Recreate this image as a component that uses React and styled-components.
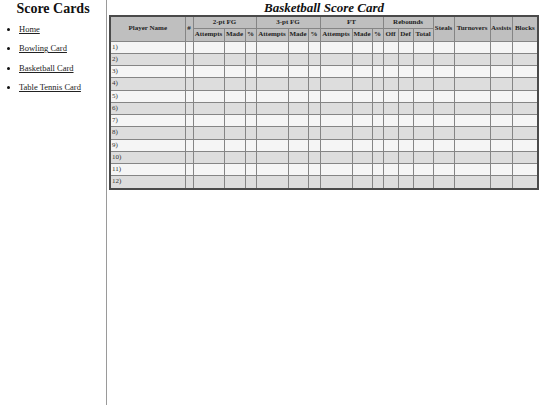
import React from "react";
import styled, { createGlobalStyle } from "styled-components";

const Global = createGlobalStyle`
  html, body { margin: 0; padding: 0; background: #fff; }
  body { font-family: "Liberation Serif", "Times New Roman", serif; color: #111; }
`;

const Page = styled.div`
  display: grid;
  grid-template-columns: 107px 1fr;
  min-height: 100vh;
`;

const Sidebar = styled.nav`
  border-right: 1px solid #9a9a9a;
`;

const SideTitle = styled.h2`
  margin: 0;
  padding-top: 1px;
  font-size: 14px;
  line-height: 16px;
  font-weight: bold;
  text-align: center;
  color: #111;
`;

const NavList = styled.ul`
  margin: 7px 0 0;
  padding-left: 19px;
  list-style: disc;
  font-size: 8.5px;
  line-height: 10px;
`;

const NavItem = styled.li`
  margin-bottom: 9.3px;
`;

const NavLink = styled.a`
  color: #222;
  text-decoration: underline;
`;

const Main = styled.main`
  padding: 0 2px;
`;

const Table = styled.table`
  width: 428px;
  table-layout: fixed;
  border-collapse: collapse;
  border: 2px solid #4a4a4a;
  font-family: "Liberation Serif", "Times New Roman", serif;
  font-size: 7px;
  line-height: 7.25px;
`;

const Caption = styled.caption`
  font-size: 13px;
  line-height: 15px;
  font-weight: bold;
  font-style: italic;
  text-align: center;
  color: #111;
`;

const Th = styled.th`
  background: #bfbfbf;
  border: 1px solid #858585;
  padding: 2px 0;
  font-weight: bold;
  text-align: center;
  vertical-align: middle;
  white-space: nowrap;
  overflow: hidden;
  color: #222;
`;

const Row = styled.tr`
  background: ${(p) => (p.$even ? "#dddddd" : "#f5f5f5")};
`;

const Td = styled.td`
  border: 1px solid #858585;
  padding: 2px 1px;
  text-align: left;
  color: #333;
  white-space: nowrap;
`;

const widths = [75, 8, 31, 21, 11, 32, 20, 12, 32, 20, 11, 15, 15, 20, 21, 36, 22, 26];
const sub = ["Attempts", "Made", "%", "Attempts", "Made", "%", "Attempts", "Made", "%", "Off", "Def", "Total"];

export default function App() {
  return (
    <>
      <Global />
      <Page>
        <Sidebar>
          <SideTitle>Score Cards</SideTitle>
          <NavList>
            {["Home", "Bowling Card", "Basketball Card", "Table Tennis Card"].map((t) => (
              <NavItem key={t}>
                <NavLink href="#">{t}</NavLink>
              </NavItem>
            ))}
          </NavList>
        </Sidebar>
        <Main>
          <Table>
            <Caption>Basketball Score Card</Caption>
            <colgroup>
              {widths.map((w, i) => (
                <col key={i} style={{ width: w }} />
              ))}
            </colgroup>
            <thead>
              <tr>
                <Th rowSpan={2}>Player Name</Th>
                <Th rowSpan={2}>#</Th>
                <Th colSpan={3}>2-pt FG</Th>
                <Th colSpan={3}>3-pt FG</Th>
                <Th colSpan={3}>FT</Th>
                <Th colSpan={3}>Rebounds</Th>
                <Th rowSpan={2}>Steals</Th>
                <Th rowSpan={2}>Turnovers</Th>
                <Th rowSpan={2}>Assists</Th>
                <Th rowSpan={2}>Blocks</Th>
              </tr>
              <tr>
                {sub.map((s, i) => (
                  <Th key={i}>{s}</Th>
                ))}
              </tr>
            </thead>
            <tbody>
              {Array.from({ length: 12 }, (_, r) => (
                <Row key={r} $even={r % 2 === 1}>
                  <Td>{r + 1})</Td>
                  {Array.from({ length: 17 }, (_, c) => (
                    <Td key={c} />
                  ))}
                </Row>
              ))}
            </tbody>
          </Table>
        </Main>
      </Page>
    </>
  );
}
